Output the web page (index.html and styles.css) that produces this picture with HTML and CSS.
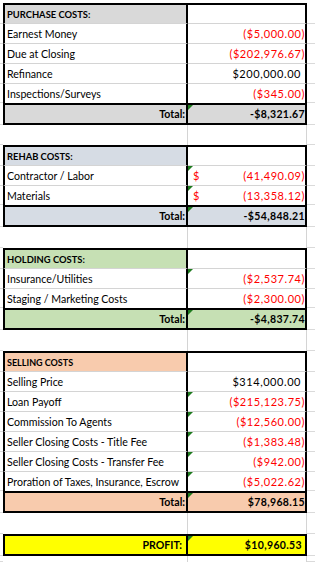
FILE: index.html
```html
<!DOCTYPE html>
<html>
<head>
<meta charset="utf-8">
<link rel="stylesheet" href="styles.css">
</head>
<body>
<div class="sheet">
  <div class="spacer"></div>

  <section class="sec purchase">
    <div class="row hd"><span class="gl"></span><div class="a"><span class="head">PURCHASE COSTS:</span></div><div class="b"></div><span class="gr"></span></div>
    <div class="row it"><span class="gl"></span><div class="a">Earnest Money</div><div class="b neg">($5,000.00)</div><span class="gr"></span></div>
    <div class="row it"><span class="gl"></span><div class="a">Due at Closing</div><div class="b neg">($202,976.67)</div><span class="gr"></span></div>
    <div class="row it"><span class="gl"></span><div class="a">Refinance</div><div class="b pos">$200,000.00</div><span class="gr"></span></div>
    <div class="row it last"><span class="gl"></span><div class="a">Inspections/Surveys</div><div class="b neg">($345.00)</div><span class="gr"></span></div>
    <div class="row tot"><span class="gl"></span><div class="a">Total:</div><div class="b"><i class="tri"></i>-$8,321.67</div><span class="gr"></span></div>
    <div class="row blank first"><span class="gl"></span><div class="a"></div><div class="b"></div><span class="gr"></span></div>
  </section>

  <section class="sec rehab">
    <div class="row hd"><span class="gl"></span><div class="a"><span class="head">REHAB COSTS:</span></div><div class="b"></div><span class="gr"></span></div>
    <div class="row it"><span class="gl"></span><div class="a">Contractor / Labor</div><div class="b neg acct"><i class="tri"></i><span class="cur">$</span><span>(41,490.09)</span></div><span class="gr"></span></div>
    <div class="row it last"><span class="gl"></span><div class="a">Materials</div><div class="b neg acct"><i class="tri"></i><span class="cur">$</span><span>(13,358.12)</span></div><span class="gr"></span></div>
    <div class="row tot"><span class="gl"></span><div class="a">Total:</div><div class="b"><i class="tri"></i>-$54,848.21</div><span class="gr"></span></div>
    <div class="row blank"><span class="gl"></span><div class="a"></div><div class="b"></div><span class="gr"></span></div>
  </section>

  <section class="sec holding">
    <div class="row hd"><span class="gl"></span><div class="a"><span class="head">HOLDING COSTS:</span></div><div class="b"></div><span class="gr"></span></div>
    <div class="row it"><span class="gl"></span><div class="a">Insurance/Utilities</div><div class="b neg"><i class="tri"></i>($2,537.74)</div><span class="gr"></span></div>
    <div class="row it last"><span class="gl"></span><div class="a">Staging / Marketing Costs</div><div class="b neg">($2,300.00)</div><span class="gr"></span></div>
    <div class="row tot"><span class="gl"></span><div class="a">Total:</div><div class="b"><i class="tri"></i>-$4,837.74</div><span class="gr"></span></div>
    <div class="row blank"><span class="gl"></span><div class="a"></div><div class="b"></div><span class="gr"></span></div>
  </section>

  <section class="sec selling">
    <div class="row hd"><span class="gl"></span><div class="a"><span class="head small">SELLING COSTS</span></div><div class="b"></div><span class="gr"></span></div>
    <div class="row it"><span class="gl"></span><div class="a">Selling Price</div><div class="b pos">$314,000.00</div><span class="gr"></span></div>
    <div class="row it"><span class="gl"></span><div class="a">Loan Payoff</div><div class="b neg"><i class="tri"></i>($215,123.75)</div><span class="gr"></span></div>
    <div class="row it"><span class="gl"></span><div class="a">Commission To Agents</div><div class="b neg"><i class="tri"></i>($12,560.00)</div><span class="gr"></span></div>
    <div class="row it"><span class="gl"></span><div class="a">Seller Closing Costs - Title Fee</div><div class="b neg"><i class="tri"></i>($1,383.48)</div><span class="gr"></span></div>
    <div class="row it"><span class="gl"></span><div class="a">Seller Closing Costs - Transfer Fee</div><div class="b neg"><i class="tri"></i>($942.00)</div><span class="gr"></span></div>
    <div class="row it last"><span class="gl"></span><div class="a">Proration of Taxes, Insurance, Escrow</div><div class="b neg"><i class="tri"></i>($5,022.62)</div><span class="gr"></span></div>
    <div class="row tot"><span class="gl"></span><div class="a">Total:</div><div class="b"><i class="tri"></i>$78,968.15</div><span class="gr"></span></div>
    <div class="row blank"><span class="gl"></span><div class="a"></div><div class="b"></div><span class="gr"></span></div>
  </section>

  <section class="sec profit">
    <div class="row tot"><span class="gl"></span><div class="a">PROFIT:</div><div class="b pos"><i class="tri"></i>$10,960.53</div><span class="gr"></span></div>
    <div class="row blank tail"><span class="gl"></span><div class="a"></div><div class="b"></div><span class="gr"></span></div>
  </section>
</div>
</body>
</html>
```

FILE: styles.css
```css
html, body {
  margin: 0;
  padding: 0;
  background: #ffffff;
}

body {
  font-family: Lato, "Liberation Sans", Arial, sans-serif;
  font-size: 10.6px;
  color: #000000;
  overflow: hidden;
}

.sheet {
  width: 315px;
}

.spacer {
  height: 3px;
}

.row {
  display: flex;
  height: 20px;
}

.gl,
.gr {
  box-sizing: border-box;
  border-bottom: 1px solid #dadada;
}

.gl {
  width: 3px;
}

.gr {
  flex: 1;
}

.a,
.b {
  box-sizing: border-box;
  display: flex;
  align-items: flex-end;
  line-height: 14px;
  padding-bottom: 2px;
  white-space: nowrap;
  position: relative;
}

.a {
  width: 185px;
  border-left: 2px solid #000;
  border-right: 2px solid #000;
  padding-left: 2px;
  padding-right: 1px;
}

.b {
  width: 119px;
  border-right: 2px solid #000;
  justify-content: flex-end;
  padding-right: 0;
  font-size: 11px;
  letter-spacing: 0.55px;
}

/* header row */
.hd {
  height: 21px;
}

.hd .a,
.hd .b {
  border-top: 2px solid #000;
  border-bottom: 1px solid #d4d4d4;
}

.hd .a {
  padding-bottom: 1px;
}

.head {
  font-weight: 700;
  font-size: 9.4px;
}

.head.small {
  font-size: 9px;
}

/* item rows */
.it .a,
.it .b {
  border-bottom: 1px solid #d4d4d4;
}

.it.last {
  height: 19px;
}

.it.last .a,
.it.last .b {
  border-bottom: none;
}

/* total rows */
.tot {
  height: 22px;
}

.tot .a,
.tot .b {
  border-top: 2px solid #000;
  border-bottom: 2px solid #000;
  font-weight: 700;
  padding-bottom: 2px;
}

.tot .a {
  justify-content: flex-end;
}

.tot .b {
  font-size: 10.5px;
  letter-spacing: 0.35px;
}

/* blank rows */
.blank {
  height: 21px;
}

.blank.first {
  height: 20px;
}

.blank.tail {
  height: 6px;
}

.blank .a {
  border-left: none;
  border-right: 1px solid #d4d4d4;
}

.blank .b {
  border-right: 1px solid #d4d4d4;
}

/* values */
.neg {
  color: #ff0000;
}

.pos {
  padding-right: 4px;
}

.acct {
  justify-content: space-between;
}

.acct .cur {
  padding-left: 5px;
}

.tri {
  position: absolute;
  top: 0;
  left: 0;
  width: 0;
  height: 0;
  border-top: 5px solid #1e7b1e;
  border-right: 5px solid transparent;
}

/* section colours */
.purchase .hd .a,
.purchase .tot .a,
.purchase .tot .b {
  background: #d9d9d9;
}

.rehab .hd .a,
.rehab .tot .a,
.rehab .tot .b {
  background: #d6dce4;
}

.holding .hd .a,
.holding .tot .a,
.holding .tot .b {
  background: #c6e0b4;
}

.selling .hd .a,
.selling .tot .a,
.selling .tot .b {
  background: #f8cbad;
}

.profit .tot .a,
.profit .tot .b {
  background: #ffff00;
}

.profit .tot .a {
  padding-right: 4px;
}

.profit .tot .b {
  padding-right: 3px;
}
```
